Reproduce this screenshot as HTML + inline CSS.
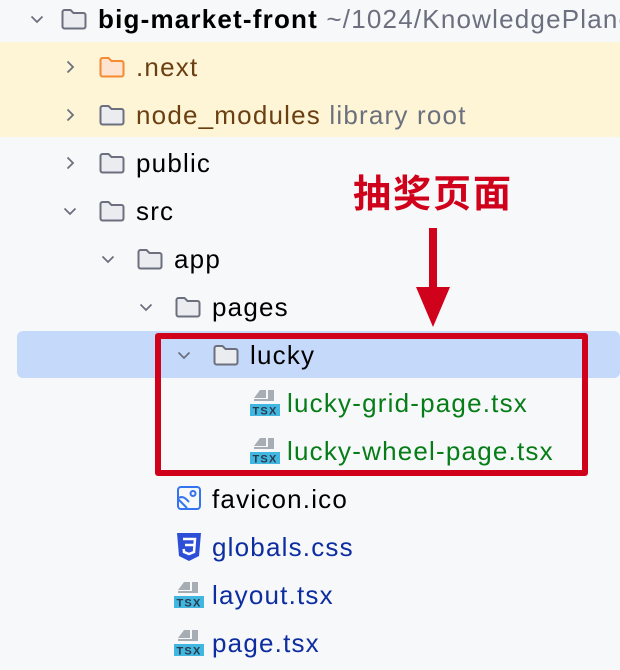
<!DOCTYPE html>
<html><head><meta charset="utf-8"><style>
body{margin:0;width:620px;height:670px;background:#f7f8fa;position:relative;overflow:hidden;font-family:"Liberation Sans",sans-serif;font-size:26px;letter-spacing:1.2px}
.r{position:absolute;left:0;height:48px;line-height:48px;white-space:nowrap}
.a{position:absolute}
svg{position:absolute}
</style></head><body>
<div class="a" style="left:0;top:42px;width:620px;height:95px;background:#fdf5d6"></div>
<div class="a" style="left:17px;top:331px;width:603px;height:47px;background:#c5d9fb;border-radius:6px"></div>

<svg width="0" height="0">
<defs>
<symbol id="cd" viewBox="0 0 16 16"><path d="M2.5 5.5l5.5 5.5 5.5-5.5" fill="none" stroke="#6c707e" stroke-width="1.8"/></symbol>
<symbol id="cr" viewBox="0 0 16 16"><path d="M5.5 2.5l5.5 5.5-5.5 5.5" fill="none" stroke="#6c707e" stroke-width="1.8"/></symbol>
<symbol id="fo" viewBox="0 0 28 24"><path d="M2.5 5a2 2 0 0 1 2-2h6l3 3h10a2 2 0 0 1 2 2v11.5a2 2 0 0 1-2 2h-19a2 2 0 0 1-2-2z" fill="#ebecf0" stroke="#6c707e" stroke-width="2"/></symbol>
<symbol id="fn" viewBox="0 0 28 24"><path d="M2.5 5a2 2 0 0 1 2-2h6l3 3h10a2 2 0 0 1 2 2v11.5a2 2 0 0 1-2 2h-19a2 2 0 0 1-2-2z" fill="#fde3d0" stroke="#f58a32" stroke-width="2"/></symbol>
<symbol id="tsx" viewBox="0 0 30 28"><path d="M10 2h6v8h-12z" fill="#a7adb5"/><rect x="18" y="2" width="6" height="10" fill="#a7adb5"/><rect x="4" y="11" width="20" height="2" fill="#a7adb5"/><rect x="0" y="16" width="30" height="12" fill="#40b6e0"/><text x="15" y="26.5" font-size="11" font-weight="bold" fill="#2a3a4a" text-anchor="middle" font-family="Liberation Sans">TSX</text></symbol>
</defs></svg>

<svg style="left:29px;top:11px" width="16" height="16"><use href="#cd"/></svg>
<svg style="left:60px;top:7px" width="28" height="24"><use href="#fo"/></svg>
<div class="r" style="top:-5px;left:98px"><b>big-market-front</b> <span style="color:#6c707e">~/1024/KnowledgePlanet</span></div>
<svg style="left:62px;top:59px" width="16" height="16"><use href="#cr"/></svg>
<svg style="left:98px;top:55px" width="28" height="24"><use href="#fn"/></svg>
<div class="r" style="top:43px;left:136px;color:#6b3f12">.next</div>
<svg style="left:62px;top:107px" width="16" height="16"><use href="#cr"/></svg>
<svg style="left:98px;top:103px" width="28" height="24"><use href="#fo"/></svg>
<div class="r" style="top:91px;left:136px;color:#6b3f12">node_modules <span style="color:#6c707e">library root</span></div>
<svg style="left:62px;top:155px" width="16" height="16"><use href="#cr"/></svg>
<svg style="left:98px;top:151px" width="28" height="24"><use href="#fo"/></svg>
<div class="r" style="top:139px;left:136px">public</div>
<svg style="left:62px;top:203px" width="16" height="16"><use href="#cd"/></svg>
<svg style="left:98px;top:199px" width="28" height="24"><use href="#fo"/></svg>
<div class="r" style="top:187px;left:136px">src</div>
<svg style="left:100px;top:251px" width="16" height="16"><use href="#cd"/></svg>
<svg style="left:136px;top:247px" width="28" height="24"><use href="#fo"/></svg>
<div class="r" style="top:235px;left:174px">app</div>
<svg style="left:138px;top:299px" width="16" height="16"><use href="#cd"/></svg>
<svg style="left:174px;top:295px" width="28" height="24"><use href="#fo"/></svg>
<div class="r" style="top:283px;left:212px">pages</div>
<svg style="left:176px;top:347px" width="16" height="16"><use href="#cd"/></svg>
<svg style="left:212px;top:343px" width="28" height="24"><use href="#fo"/></svg>
<div class="r" style="top:331px;left:250px">lucky</div>
<svg style="left:250px;top:388px" width="30" height="28"><use href="#tsx"/></svg>
<div class="r" style="top:379px;left:287px;color:#067d17">lucky-grid-page.tsx</div>
<svg style="left:250px;top:436px" width="30" height="28"><use href="#tsx"/></svg>
<div class="r" style="top:427px;left:287px;color:#067d17">lucky-wheel-page.tsx</div>

<svg style="left:176px;top:485px" width="26" height="26" viewBox="0 0 26 26"><rect x="2" y="2" width="22" height="22" rx="3" fill="none" stroke="#3574f0" stroke-width="2"/><circle cx="17" cy="8.5" r="2.5" fill="none" stroke="#3574f0" stroke-width="2"/><path d="M2 14l9 9M3 13c4-3 8 2 10 4" fill="none" stroke="#3574f0" stroke-width="2"/></svg>
<div class="r" style="top:475px;left:212px">favicon.ico</div>
<svg style="left:176px;top:532px" width="26" height="30" viewBox="0 0 26 30"><path d="M1 1h24l-2 23-10 5-10-5z" fill="#2d4fd8"/><path d="M7 7h12l-1 13-5 2-5-2-.3-3M9 13h9" fill="none" stroke="#fff" stroke-width="2.5"/></svg>
<div class="r" style="top:523px;left:212px;color:#0d2da0">globals.css</div>
<svg style="left:174px;top:580px" width="30" height="28"><use href="#tsx"/></svg>
<div class="r" style="top:571px;left:212px;color:#0d2da0">layout.tsx</div>
<svg style="left:174px;top:628px" width="30" height="28"><use href="#tsx"/></svg>
<div class="r" style="top:619px;left:212px;color:#0d2da0">page.tsx</div>

<div class="a" style="left:155px;top:333px;width:421px;height:131px;border:6px solid #d0021b;border-radius:3px"></div>
<div class="a" style="left:353px;top:170px;font-size:38px;font-weight:bold;color:#d0021b;font-family:'Liberation Sans','Noto Sans CJK SC',sans-serif;line-height:50px;letter-spacing:2px">抽奖页面</div>
<div class="a" style="left:429px;top:228px;width:8px;height:62px;background:#d0021b"></div>
<svg style="left:416px;top:287px" width="34" height="40"><path d="M0 0h34L17 40z" fill="#d0021b"/></svg>
</body></html>
